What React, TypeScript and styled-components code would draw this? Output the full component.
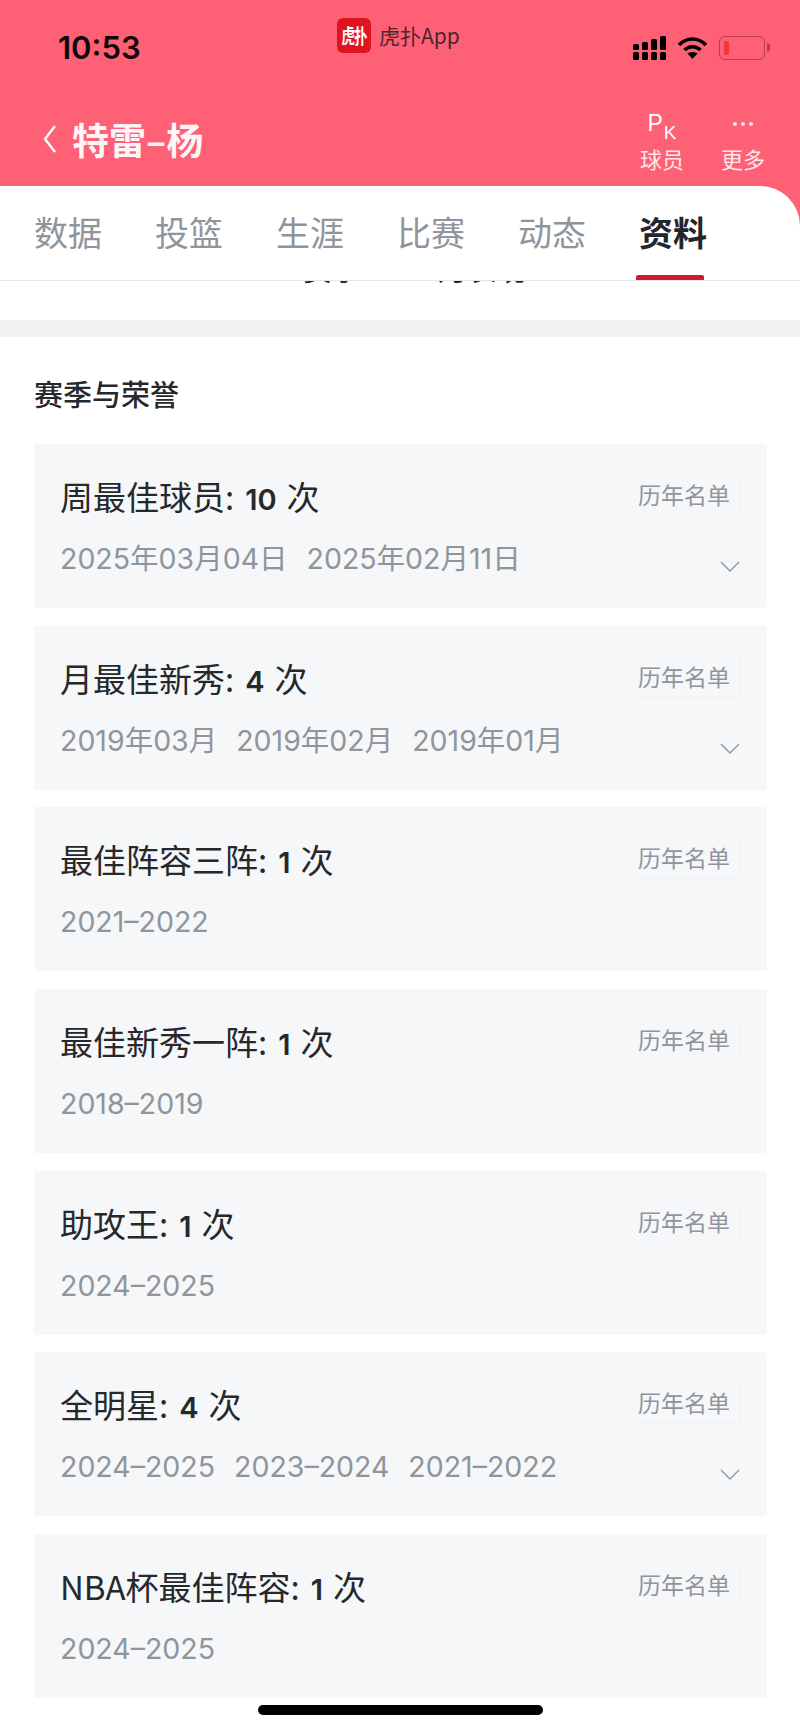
import React from 'react';
import styled, { createGlobalStyle } from 'styled-components';

const GlobalStyle = createGlobalStyle`
  html, body {
    margin: 0;
    padding: 0;
    background: #fff;
  }
  * {
    box-sizing: border-box;
  }
`;

const honors = [
  { name: '周最佳球员', count: 10, dates: ['2025年03月04日', '2025年02月11日'], more: true },
  { name: '月最佳新秀', count: 4, dates: ['2019年03月', '2019年02月', '2019年01月'], more: true },
  { name: '最佳阵容三阵', count: 1, dates: ['2021–2022'] },
  { name: '最佳新秀一阵', count: 1, dates: ['2018–2019'] },
  { name: '助攻王', count: 1, dates: ['2024–2025'] },
  { name: '全明星', count: 4, dates: ['2024–2025', '2023–2024', '2021–2022'], more: true },
  { name: 'NBA杯最佳阵容', count: 1, dates: ['2024–2025'] },
];

const tabs = ['数据', '投篮', '生涯', '比赛', '动态', '资料'];

const App = () => {
  return (
    <Page>
      <GlobalStyle />
      <Header>
        <StatusBar>
          <Time>10:53</Time>
          <AppBadge>
            <AppLogo>
              <LogoGlyph>虎扑</LogoGlyph>
            </AppLogo>
            <AppName>虎扑App</AppName>
          </AppBadge>
          <StatusIcons>
            <svg width="33" height="26" viewBox="0 0 33 26">
              <g fill="#000">
                <rect x="0" y="17" width="6" height="8" rx="1.5" />
                <rect x="0" y="9" width="6" height="6" rx="1.5" />
                <rect x="9" y="17" width="6" height="8" rx="1.5" />
                <rect x="9" y="7" width="6" height="8" rx="1.5" />
                <rect x="18" y="17" width="6" height="8" rx="1.5" />
                <rect x="18" y="4" width="6" height="11" rx="1.5" />
                <rect x="27" y="17" width="6" height="8" rx="1.5" />
                <rect x="27" y="1" width="6" height="14" rx="1.5" />
              </g>
            </svg>
            <svg width="31" height="24" viewBox="0 0 31 24">
              <path d="M2 9 C10 1 21 1 29 9" fill="none" stroke="#000" strokeWidth="3.6" />
              <path d="M7.5 14 C12 9.6 19 9.6 23.5 14" fill="none" stroke="#000" strokeWidth="3.6" />
              <path d="M15.5 23 L10.5 17.6 C13 15.6 18 15.6 20.5 17.6 Z" fill="#000" />
            </svg>
            <Battery>
              <BatteryLevel />
            </Battery>
          </StatusIcons>
        </StatusBar>
        <NavBar>
          <NavTitle>
            <svg width="16" height="30" viewBox="0 0 16 30">
              <path d="M13 2 L3 15 L13 28" fill="none" stroke="#fff" strokeWidth="2.4" />
            </svg>
            <PlayerName>特雷–杨</PlayerName>
          </NavTitle>
          <NavActions>
            <NavAction>
              <PkMark>
                P<small>K</small>
              </PkMark>
              <NavLabel>球员</NavLabel>
            </NavAction>
            <NavAction>
              <Dots>
                <i />
                <i />
                <i />
              </Dots>
              <NavLabel>更多</NavLabel>
            </NavAction>
          </NavActions>
        </NavBar>
      </Header>

      <TabBar>
        {tabs.map((tab) => (
          <Tab key={tab} $active={tab === '资料'}>
            {tab}
          </Tab>
        ))}
      </TabBar>

      <ScrolledOff>
        <ScrolledText>赛季 2024 月表现</ScrolledText>
      </ScrolledOff>
      <Divider />

      <Section>
        <SectionTitle>赛季与荣誉</SectionTitle>
        <CardList>
          {honors.map((honor) => (
            <Card key={honor.name}>
              <CardTop>
                <HonorName>
                  {honor.name}:<b>{honor.count}</b>次
                </HonorName>
                <HistoryButton>历年名单</HistoryButton>
              </CardTop>
              <CardBottom>
                <Dates>
                  {honor.dates.map((date) => (
                    <span key={date}>{date}</span>
                  ))}
                </Dates>
                {honor.more && (
                  <svg width="20" height="12" viewBox="0 0 20 12">
                    <path d="M1 1 L10 10 L19 1" fill="none" stroke="#8f959c" strokeWidth="1.4" />
                  </svg>
                )}
              </CardBottom>
            </Card>
          ))}
        </CardList>
      </Section>
      <HomeIndicator />
    </Page>
  );
};

export default App;

const FONT = `'Noto Sans CJK SC', 'Noto Sans', sans-serif`;

const Page = styled.div`
  position: relative;
  width: 800px;
  height: 1731px;
  overflow: hidden;
  background: #fff;
  font-family: ${FONT};
`;

const Header = styled.header`
  height: 227px;
  background: #fe6076;
`;

const StatusBar = styled.div`
  height: 90px;
  padding: 16px 35px 0 58px;
  display: flex;
  align-items: flex-start;
`;

const Time = styled.div`
  margin-top: 14px;
  flex: 0 0 279px;
  font-family: Inter, 'Liberation Sans', sans-serif;
  font-size: 31px;
  line-height: 36px;
  font-weight: 600;
  color: #12080a;
`;

const AppBadge = styled.div`
  display: flex;
  align-items: center;
  gap: 8px;
  margin-top: 1px;
`;

const AppLogo = styled.div`
  width: 34px;
  height: 35px;
  border-radius: 6px;
  background: #e0141f;
  display: flex;
  align-items: center;
  justify-content: center;
  overflow: hidden;
`;

const LogoGlyph = styled.span`
  font-size: 15px;
  font-weight: 700;
  color: #fff;
  letter-spacing: -1px;
  white-space: nowrap;
  transform: scaleX(0.9) scaleY(1.35);
`;

const AppName = styled.span`
  font-size: 21px;
  line-height: 36px;
  color: #4a2630;
`;

const StatusIcons = styled.div`
  margin: 19px 0 0 auto;
  display: flex;
  align-items: center;
  gap: 11px;
`;

const Battery = styled.div`
  position: relative;
  width: 46px;
  height: 24px;
  padding: 4px;
  border: 1.5px solid #b5404f;
  border-radius: 6px;
  &::after {
    content: '';
    position: absolute;
    right: -6px;
    top: 6px;
    width: 3px;
    height: 9px;
    border-radius: 0 3px 3px 0;
    background: #b5404f;
  }
`;

const BatteryLevel = styled.div`
  width: 5px;
  height: 100%;
  border-radius: 1px;
  background: #f03a3a;
`;

const NavBar = styled.div`
  height: 97px;
  padding: 0 35px 0 42px;
  display: flex;
  justify-content: space-between;
`;

const NavTitle = styled.div`
  display: flex;
  align-items: center;
  gap: 14px;
  height: 98px;
`;

const PlayerName = styled.h1`
  margin: 0;
  font-size: 37px;
  line-height: 48px;
  font-weight: 700;
  color: #fff;
  opacity: 0.94;
`;

const NavActions = styled.div`
  display: flex;
  gap: 37px;
  padding-top: 18px;
`;

const NavAction = styled.div`
  width: 44px;
  display: flex;
  flex-direction: column;
  align-items: center;
`;

const PkMark = styled.div`
  height: 36px;
  padding-top: 2px;
  font-family: 'Liberation Sans', sans-serif;
  font-size: 23px;
  line-height: 26px;
  color: #fff;
  small {
    display: inline-block;
    margin-left: 1px;
    font-size: 19px;
    transform: translateY(8px);
  }
`;

const Dots = styled.div`
  height: 36px;
  display: flex;
  gap: 4px;
  padding-top: 14px;
  i {
    width: 4px;
    height: 4px;
    border-radius: 50%;
    background: #ffe9ec;
  }
`;

const NavLabel = styled.span`
  font-size: 22px;
  line-height: 28px;
  color: #ffe6ea;
  white-space: nowrap;
`;

const TabBar = styled.nav`
  position: relative;
  margin-top: -41px;
  height: 95px;
  padding: 0 0 0 34px;
  display: flex;
  gap: 53px;
  background: #fff;
  border-top-right-radius: 40px;
  border-bottom: 1px solid #e6e7e9;
`;

const Tab = styled.div<{ $active?: boolean }>`
  position: relative;
  padding-top: 22px;
  font-size: 34px;
  line-height: 48px;
  font-weight: ${({ $active }) => ($active ? 700 : 400)};
  color: ${({ $active }) => ($active ? '#23262b' : '#8f959b')};
  ${({ $active }) =>
    $active &&
    `&::after {
      content: '';
      position: absolute;
      left: -3px;
      right: 3px;
      bottom: 0;
      height: 5px;
      border-radius: 2px 2px 0 0;
      background: #cf1b2b;
    }`}
`;

const ScrolledOff = styled.div`
  height: 39px;
  padding-left: 28px;
  overflow: hidden;
  display: flex;
  justify-content: center;
`;

const ScrolledText = styled.div`
  margin-top: -28px;
  font-size: 29px;
  line-height: 30px;
  color: #23262b;
`;

const Divider = styled.div`
  height: 17px;
  background: #f0f1f3;
`;

const Section = styled.section`
  padding: 0 33px 0 34px;
`;

const SectionTitle = styled.h2`
  margin: 0;
  padding-top: 36px;
  height: 107px;
  font-size: 29px;
  line-height: 40px;
  font-weight: 500;
  color: #26282c;
`;

const CardList = styled.div`
  display: flex;
  flex-direction: column;
  gap: 17.7px;
`;

const Card = styled.article`
  height: 164px;
  padding: 31px 27px 0 26px;
  background: #f5f7f9;
  border-radius: 2px;
`;

const CardTop = styled.div`
  display: flex;
  justify-content: space-between;
  align-items: flex-start;
`;

const HonorName = styled.div`
  font-size: 33px;
  line-height: 42px;
  color: #26282c;
  b {
    margin: 0 10px 0 11px;
    font-weight: 600;
    font-family: Inter, sans-serif;
    font-size: 29px;
  }
`;

const HistoryButton = styled.div`
  padding: 2px 0 4px 2px;
  width: 104px;
  font-size: 23px;
  line-height: 34px;
  color: #8f959b;
  border-right: 1px solid #f0f1f3;
  border-bottom: 1px solid #f0f1f3;
`;

const CardBottom = styled.div`
  margin-top: 18px;
  display: flex;
  justify-content: space-between;
  align-items: flex-end;
  svg {
    margin-bottom: 6px;
  }
`;

const Dates = styled.div`
  display: flex;
  gap: 19px;
  font-family: Inter, ${FONT};
  font-size: 28.5px;
  line-height: 40px;
  font-weight: 400;
  color: #8f959b;
`;

const HomeIndicator = styled.div`
  position: absolute;
  left: 258px;
  bottom: 16px;
  width: 285px;
  height: 10px;
  border-radius: 5px;
  background: #000;
`;
